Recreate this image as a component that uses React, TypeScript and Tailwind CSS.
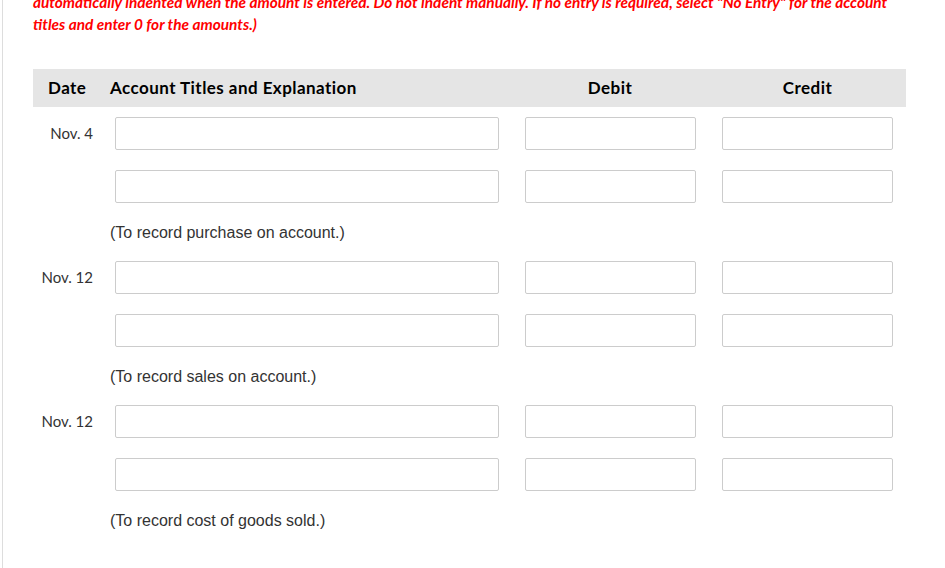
import React from "react";

type Group = { date: string; note: string };

const groups: Group[] = [
  { date: "Nov. 4", note: "(To record purchase on account.)" },
  { date: "Nov. 12", note: "(To record sales on account.)" },
  { date: "Nov. 12", note: "(To record cost of goods sold.)" },
];

function Box({ w }: { w: string }) {
  return (
    <input
      type="text"
      className={`${w} h-[33px] rounded-[2px] border border-[#cccccc] bg-white outline-none`}
    />
  );
}

function Row({ date }: { date?: string }) {
  return (
    <div className="grid grid-cols-[75px_403px_198px_197px] items-center">
      <div className="pr-[15px] text-right text-[15px] text-[#333333] [font-family:Lato,'Liberation_Sans',sans-serif]">
        {date ?? ""}
      </div>
      <div className="pl-[7px]">
        <Box w="w-[384px]" />
      </div>
      <div className="flex justify-center">
        <Box w="w-[171px]" />
      </div>
      <div className="flex justify-center">
        <Box w="w-[171px]" />
      </div>
    </div>
  );
}

export default function App() {
  return (
    <div className="h-[568px] w-[945px] overflow-hidden bg-white">
      <div className="ml-[2px] flex h-full flex-col border-l border-[#dddddd] pl-[30px]">
        <p className="-mt-[9px] text-[15.4px] leading-[22px] font-bold italic text-[#ff0000] [font-family:Lato,'Liberation_Sans',sans-serif]">
          automatically indented when the amount is entered. Do not indent manually. If no entry is required, select "No Entry" for the account
          <br />
          titles and enter 0 for the amounts.)
        </p>

        <div className="mt-[34px] w-[873px]">
          <div className="grid h-[38px] grid-cols-[75px_403px_198px_197px] items-center bg-[#e5e5e5] text-[17px] tracking-[0.45px] font-bold text-black [font-family:Lato,'Liberation_Sans',sans-serif]">
            <div className="pl-[15px]">Date</div>
            <div className="pl-[2px]">Account Titles and Explanation</div>
            <div className="text-center">Debit</div>
            <div className="text-center">Credit</div>
          </div>

          <div className="pt-[10px]">
            {groups.map((g, i) => (
              <div key={i}>
                <Row date={g.date} />
                <div className="mt-[20px]">
                  <Row />
                </div>
                <div className="flex h-[58px] items-center pb-[1px] pl-[77px] text-[16px] text-[#333333] [font-family:'Liberation_Sans',Arial,sans-serif]">
                  <span className="translate-y-[1px]">{g.note}</span>
                </div>
              </div>
            ))}
          </div>
        </div>
      </div>
    </div>
  );
}
